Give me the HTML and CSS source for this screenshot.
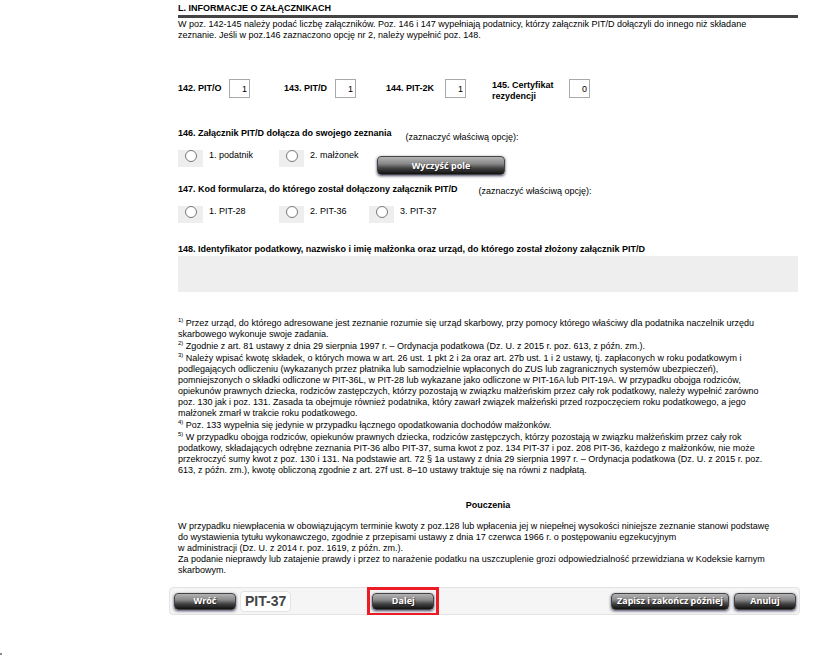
FILE: index.html
```
<!DOCTYPE html>
<html lang="pl">
<head>
    <meta charset="UTF-8">
    <meta name="viewport" content="width=device-width, initial-scale=1.0">
    <title>PIT-37</title>
    <link rel="stylesheet" href="styles.css">
</head>
<body>
    <form class="page">
        <div class="content">
            <h2 class="section-title">L. INFORMACJE O ZAŁĄCZNIKACH</h2>
            <p>W poz. 142-145 należy podać liczbę załączników. Poz. 146 i 147 wypełniają podatnicy, którzy załącznik PIT/D dołączyli do innego niż składane<br>zeznanie. Jeśli w poz.146 zaznaczono opcję nr 2, należy wypełnić poz. 148.</p>

            <div class="attachments">
                <div class="field">
                    <label for="poz142">142. PIT/O</label>
                    <input type="text" id="poz142" value="1">
                </div>
                <div class="field">
                    <label for="poz143">143. PIT/D</label>
                    <input type="text" id="poz143" value="1">
                </div>
                <div class="field wide">
                    <label for="poz144">144. PIT-2K</label>
                    <input type="text" id="poz144" value="1">
                </div>
                <div class="field widest">
                    <label for="poz145">145. Certyfikat<br>rezydencji</label>
                    <input type="text" id="poz145" value="0">
                </div>
            </div>

            <div class="question">
                <h3>146. Załącznik PIT/D dołącza do swojego zeznania</h3>
                <span class="hint">(zaznaczyć właściwą opcję):</span>
            </div>
            <div class="options">
                <div class="option">
                    <span class="radio-box"><input type="radio" name="poz146" id="podatnik"></span>
                    <label for="podatnik">1. podatnik</label>
                </div>
                <div class="option">
                    <span class="radio-box"><input type="radio" name="poz146" id="malzonek"></span>
                    <label for="malzonek">2. małżonek</label>
                </div>
                <button type="button" class="btn btn-clear">Wyczyść pole</button>
            </div>

            <div class="question">
                <h3>147. Kod formularza, do którego został dołączony załącznik PIT/D</h3>
                <span class="hint">(zaznaczyć właściwą opcję):</span>
            </div>
            <div class="options">
                <div class="option">
                    <span class="radio-box"><input type="radio" name="poz147" id="pit28"></span>
                    <label for="pit28">1. PIT-28</label>
                </div>
                <div class="option">
                    <span class="radio-box"><input type="radio" name="poz147" id="pit36"></span>
                    <label for="pit36">2. PIT-36</label>
                </div>
                <div class="option">
                    <span class="radio-box"><input type="radio" name="poz147" id="pit37"></span>
                    <label for="pit37">3. PIT-37</label>
                </div>
            </div>

            <label class="identifier-label" for="poz148">148. Identyfikator podatkowy, nazwisko i imię małżonka oraz urząd, do którego został złożony załącznik PIT/D</label>
            <textarea class="identifier" id="poz148" disabled></textarea>

            <div class="footnotes">
                <p><sup>1)</sup> Przez urząd, do którego adresowane jest zeznanie rozumie się urząd skarbowy, przy pomocy którego właściwy dla podatnika naczelnik urzędu<br>skarbowego wykonuje swoje zadania.</p>
                <p><sup>2)</sup> Zgodnie z art. 81 ustawy z dnia 29 sierpnia 1997 r. – Ordynacja podatkowa (Dz. U. z 2015 r. poz. 613, z późn. zm.).</p>
                <p><sup>3)</sup> Należy wpisać kwotę składek, o których mowa w art. 26 ust. 1 pkt 2 i 2a oraz art. 27b ust. 1 i 2 ustawy, tj. zapłaconych w roku podatkowym i<br>podlegających odliczeniu (wykazanych przez płatnika lub samodzielnie wpłaconych do ZUS lub zagranicznych systemów ubezpieczeń),<br>pomniejszonych o składki odliczone w PIT-36L, w PIT-28 lub wykazane jako odliczone w PIT-16A lub PIT-19A. W przypadku obojga rodziców,<br>opiekunów prawnych dziecka, rodziców zastępczych, którzy pozostają w związku małżeńskim przez cały rok podatkowy, należy wypełnić zarówno<br>poz. 130 jak i poz. 131. Zasada ta obejmuje również podatnika, który zawarł związek małżeński przed rozpoczęciem roku podatkowego, a jego<br>małżonek zmarł w trakcie roku podatkowego.</p>
                <p><sup>4)</sup> Poz. 133 wypełnia się jedynie w przypadku łącznego opodatkowania dochodów małżonków.</p>
                <p><sup>5)</sup> W przypadku obojga rodziców, opiekunów prawnych dziecka, rodziców zastępczych, którzy pozostają w związku małżeńskim przez cały rok<br>podatkowy, składających odrębne zeznania PIT-36 albo PIT-37, suma kwot z poz. 134 PIT-37 i poz. 208 PIT-36, każdego z małżonków, nie może<br>przekroczyć sumy kwot z poz. 130 i 131. Na podstawie art. 72 § 1a ustawy z dnia 29 sierpnia 1997 r. – Ordynacja podatkowa (Dz. U. z 2015 r. poz.<br>613, z późn. zm.), kwotę obliczoną zgodnie z art. 27f ust. 8–10 ustawy traktuje się na równi z nadpłatą.</p>
            </div>

            <h3 class="notice-title">Pouczenia</h3>
            <p>W przypadku niewpłacenia w obowiązującym terminie kwoty z poz.128 lub wpłacenia jej w niepełnej wysokości niniejsze zeznanie stanowi podstawę<br>do wystawienia tytułu wykonawczego, zgodnie z przepisami ustawy z dnia 17 czerwca 1966 r. o postępowaniu egzekucyjnym<br>w administracji (Dz. U. z 2014 r. poz. 1619, z późn. zm.).</p>
            <p>Za podanie nieprawdy lub zatajenie prawdy i przez to narażenie podatku na uszczuplenie grozi odpowiedzialność przewidziana w Kodeksie karnym<br>skarbowym.</p>
        </div>

        <div class="toolbar">
            <button type="button" class="btn">Wróć</button>
            <span class="form-name">PIT-37</span>
            <span class="highlight"><button type="button" class="btn">Dalej</button></span>
            <div class="toolbar-right">
                <button type="button" class="btn btn-save">Zapisz i zakończ później</button>
                <button type="button" class="btn">Anuluj</button>
            </div>
        </div>
    </form>
    <div class="corner"></div>
</body>
</html>
```

FILE: styles.css
```
* {
    box-sizing: border-box;
}
body {
    margin: 0;
    background-color: #fff;
    color: #000;
    font-family: "Liberation Sans", Arial, sans-serif;
    font-size: 9px;
    line-height: 11px;
}
p, h2, h3 {
    margin: 0;
    font-size: 9px;
}
.page {
    padding: 3px 21px 0 169px;
}
.content {
    padding: 0 2px 0 9px;
    white-space: nowrap;
}
.section-title {
    padding-bottom: 1px;
    border-bottom: 3px solid #454545;
    margin-bottom: 1px;
}
/* Number of attachments */
.attachments {
    display: flex;
    margin-top: 38px;
}
.field {
    display: flex;
    align-items: flex-start;
    width: 106px;
}
.field label {
    width: 51px;
    padding-top: 4px;
    font-weight: bold;
}
.field input {
    width: 21px;
    height: 19px;
    padding: 0 2px;
    border: 1px solid #a9a9a9;
    background-color: #fff;
    font-family: inherit;
    font-size: 9px;
    text-align: right;
}
.field:nth-child(2) {
    width: 102px;
}
.field.wide label {
    width: 59px;
}
.field.widest label {
    width: 77px;
    padding-top: 1px;
}
/* Questions with radio buttons */
.question {
    display: flex;
    gap: 14px;
    height: 22px;
    margin-top: 26px;
}
.hint {
    padding-top: 4px;
}
.options {
    display: grid;
    grid-template-columns: 101px 90px 1fr;
    height: 17px;
}
.options + .question {
    gap: 21px;
    margin-top: 17px;
}
.options + .question .hint {
    padding-top: 2px;
}
.option {
    display: flex;
    gap: 6px;
}
.radio-box {
    display: flex;
    justify-content: center;
    width: 25px;
    height: 17px;
    background-color: #eee;
}
.radio-box input {
    width: 12px;
    height: 12px;
    margin: 0;
}
.identifier-label {
    display: block;
    margin-top: 21px;
    font-weight: bold;
}
.identifier {
    display: block;
    width: 100%;
    height: 36px;
    margin-top: 1px;
    border: none;
    background-color: #eee;
    resize: none;
}
/* Notes */
.footnotes {
    margin-top: 26px;
}
.footnotes p + p {
    margin-top: 1px;
}
sup {
    font-size: 6px;
    line-height: 0;
}
.notice-title {
    margin: 24px 0 10px;
    text-align: center;
}
/* Buttons */
.btn {
    width: 62px;
    height: 17px;
    padding: 0;
    border: 1px solid #444;
    border-radius: 4px;
    background: linear-gradient(#b4b4b4, #888 40%, #444 65%, #111);
    box-shadow: 0 1px 3px #446;
    color: #fff;
    font-family: "Open Sans", sans-serif;
    font-size: 9px;
    font-weight: bold;
    line-height: 14px;
    text-shadow: 1px 1px 1px #222;
    white-space: nowrap;
    cursor: pointer;
}
.btn-clear {
    width: 128px;
    height: 19px;
    margin: 6px 0 0 8px;
}
.btn-save {
    width: 118px;
}
.toolbar {
    display: flex;
    align-items: center;
    height: 28px;
    margin-top: 11px;
    padding: 0 3px 0 4px;
    border: 1px solid #e3e3e3;
    border-radius: 4px;
    background-color: #f5f5f5;
}
.form-name {
    height: 21px;
    margin-left: 4px;
    padding: 0 4px;
    border: 1px solid #e3e3e3;
    border-radius: 4px;
    background-color: #fff;
    color: #444;
    font-size: 14px;
    font-weight: bold;
    line-height: 19px;
}
.highlight {
    display: flex;
    margin-left: 76px;
    padding: 3px 2px;
    border: 3px solid #ed1c24;
}
.toolbar-right {
    display: flex;
    gap: 5px;
    margin-left: auto;
}
/* Edge of the status bubble */
.corner {
    position: fixed;
    bottom: 0;
    left: 0;
    width: 2px;
    height: 2px;
    background-color: #888;
}
```
